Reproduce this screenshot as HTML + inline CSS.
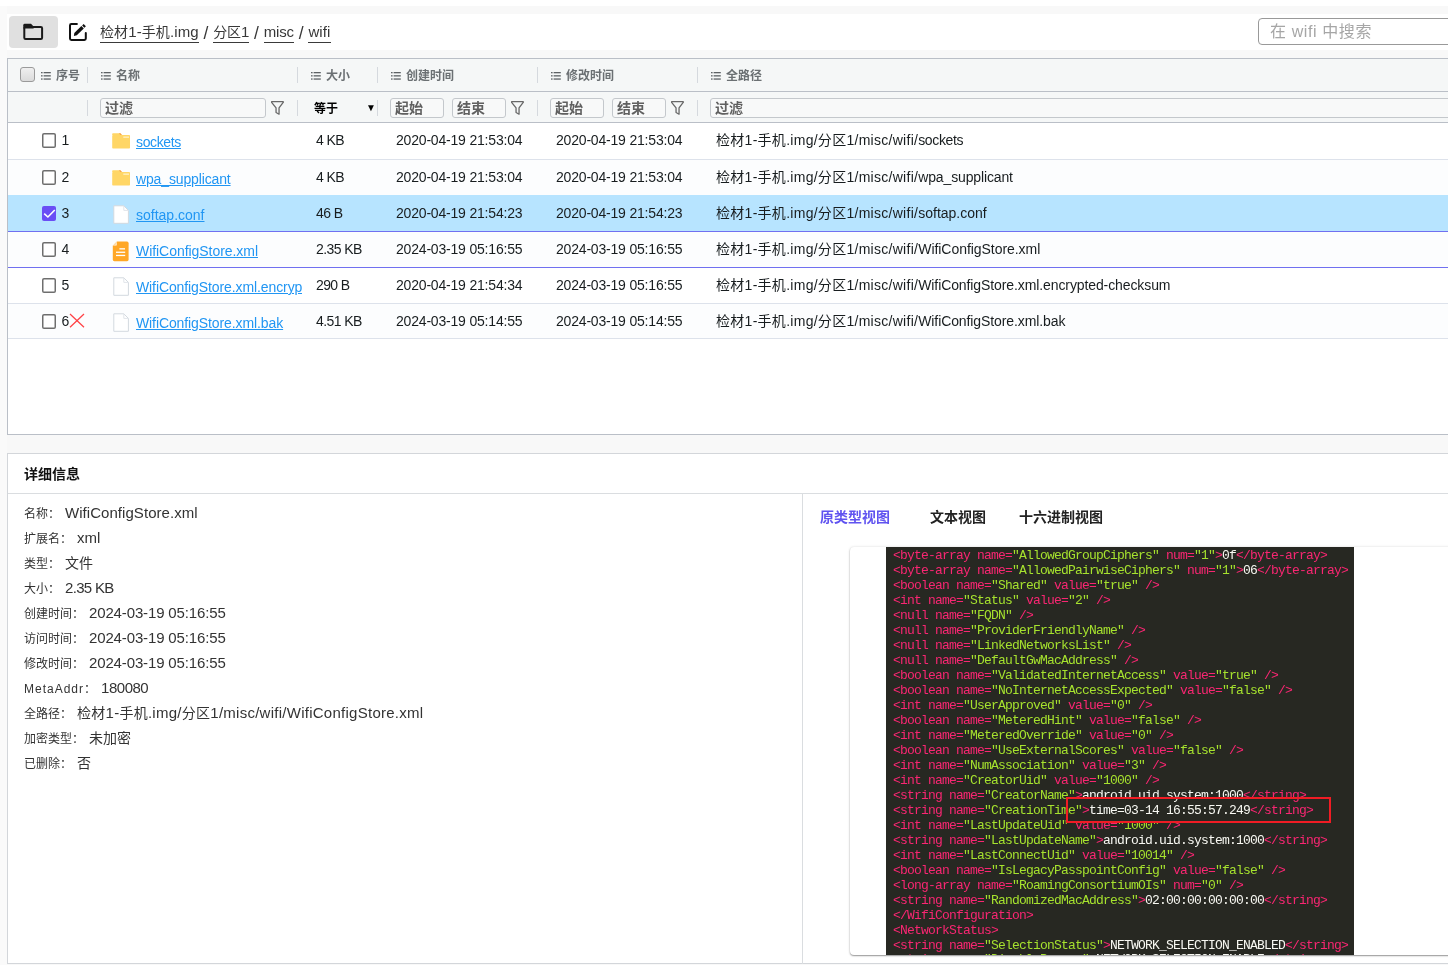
<!DOCTYPE html>
<html lang="zh-CN">
<head>
<meta charset="utf-8">
<title>wifi</title>
<style>
*{box-sizing:border-box;}
html,body{margin:0;padding:0;}
body{width:1448px;height:965px;overflow:hidden;position:relative;background:#f8f8f8;
  font-family:"Liberation Sans","Noto Sans CJK SC",sans-serif;color:#181d1f;font-size:14px;}
.abs{position:absolute;}
svg{display:block;overflow:visible;}
#topwhite{left:0;top:0;width:1448px;height:6px;background:#fff;}
#leftstrip{left:0;top:6px;width:7px;height:959px;background:#fafafa;}
#toolbar{left:7px;top:14px;width:1441px;height:36px;background:#fff;}
#folderbtn{left:9px;top:16px;width:49px;height:32px;background:#e0e0e0;border-radius:4px;}
#crumbs{left:100px;top:21px;height:22px;line-height:22px;font-size:14.5px;color:#333;white-space:nowrap;}
#crumbs span.c{border-bottom:1px solid #333;padding-bottom:1px;}
#search{left:1258px;top:17px;width:200px;height:28px;border:1px solid #999;border-radius:4px;background:#fff;
  font-size:16px;color:#a0a0a0;line-height:26px;padding-left:11px;white-space:nowrap;}
#grid{left:7px;top:58px;width:1450px;height:377px;border:1px solid #babfc7;background:#fff;}
#ghead{left:0;top:0;width:1448px;height:33px;background:#f5f7f7;border-bottom:1px solid #babfc7;}
#gfilter{left:0;top:33px;width:1448px;height:31px;background:#f5f7f7;border-bottom:1px solid #babfc7;}
.hc{position:absolute;top:0;height:32px;line-height:32px;font-size:12px;font-weight:bold;color:#5d6265;white-space:nowrap;}
.sep{position:absolute;width:1px;background:#d5d9de;}
.mi{position:absolute;top:13px;width:10px;height:8px;}
.fu{position:absolute;top:9px;width:14px;height:14px;}
.fin{position:absolute;top:6px;height:20px;border:1px solid #c4c8cc;border-radius:3px;background:#f8f9f9;font-size:14px;line-height:18px;color:#555;padding-left:4px;font-weight:bold;white-space:nowrap;}
.row{position:absolute;left:0;width:1448px;height:36px;border-bottom:1px solid #dde2eb;background:#fff;}
.row.odd{background:#fcfdfe;}
.row.sel{background:#b7e4ff;border-bottom-color:#7070f0;}
.row.foc{border-bottom-color:#7070f0;}
.cell{position:absolute;top:0;height:35px;line-height:34px;font-size:14px;color:#181d1f;white-space:nowrap;}
.cb{position:absolute;left:34px;top:10px;width:15px;height:15px;border:1.5px solid #777;border-radius:3px;background:#fff;}
.cb.on{background:#6a4df5;border-color:#6a4df5;}
.lnk{color:#2196f3;text-decoration:underline;}
.ic{position:absolute;left:104px;}
#detail{left:7px;top:453px;width:1450px;height:511px;border:1px solid #d9d9d9;background:#fff;}
#dtitle{left:16px;top:11px;font-size:14px;font-weight:bold;color:#222;line-height:20px;}
#dline{left:0;top:39px;width:1448px;height:1px;background:#e0e0e0;}
#dvline{left:794px;top:40px;width:1px;height:470px;background:#e0e0e0;}
.kv{position:absolute;left:16px;height:20px;line-height:20px;white-space:nowrap;font-size:15px;color:#333;}
.kv b{font-weight:normal;font-size:12px;color:#333;margin-right:5px;}
.tab{position:absolute;top:54px;font-size:14px;font-weight:bold;color:#222;line-height:20px;white-space:nowrap;}
#card{left:842px;top:93px;width:620px;height:408px;background:#fff;border-radius:4px;box-shadow:0 1px 4px rgba(0,0,0,.25);}
#code{left:878px;top:93px;width:468px;height:408px;background:#272822;overflow:hidden;}
pre{margin:0;position:absolute;font-family:"Liberation Mono","DejaVu Sans Mono",monospace;font-size:11.67px;line-height:15px;color:#f92672;white-space:pre;}
#code pre{left:7px;top:0px;}
pre i{font-style:normal;color:#a6e22e;}
pre u{text-decoration:none;color:#f8f8f2;}
#redbox{left:1058px;top:344px;width:265px;height:26px;border:2px solid #e8262d;background:#272822;overflow:hidden;}
#hcb{left:12px;top:9px;width:15px;height:15px;border:1px solid #9a9a9a;border-radius:3px;background:linear-gradient(#efefef,#dbdbdb);}
#eq{left:306px;top:0;height:31px;line-height:31px;font-size:12px;font-weight:bold;color:#000;}
#tri{left:360px;top:0;height:31px;line-height:31px;font-size:9px;color:#000;}
.tm{letter-spacing:-0.19px;}
.sz{letter-spacing:-0.6px;}
.pf{letter-spacing:0.28px;}
#rbp{left:0;top:0;}
#crumbs .sl{display:inline-block;width:14.55px;text-align:center;}
#root{position:absolute;left:0;top:0;width:1448px;height:965px;will-change:transform;}
.hc{font-weight:700;color:#6b7073;top:1px;}
.fin{font-weight:700;color:#606060;}
.cell{top:-1px;}
.cell.nm{top:1.5px;}
.cb{top:9px;left:33.5px;border-radius:2.5px;}
.cb{top:10px;border-radius:2px;}
.row.sel{box-shadow:0 -1px 0 #b7e4ff;}
.cell{top:0.3px;}
.cell.nm{top:2px;}
.cb{border:1.7px solid #757575;}
.kv em{font-style:normal;font-size:14px;}
.kv s{text-decoration:none;letter-spacing:1px;}
pre{font-size:13px;letter-spacing:-0.801px;}
#code pre{top:1px;}
.tab{top:52.5px;}
#dtitle{top:9.5px;}
#redbox{left:1058px;top:343px;width:265px;height:26px;border:2px solid #f01c24;}
#rbp{left:-175px;top:-11px;}
#search{top:18px;height:27px;line-height:26px;letter-spacing:0.6px;color:#a6a6a6;}
#card{box-shadow:0 1px 1.5px rgba(0,0,0,.38),0 0 3px rgba(0,0,0,.12);height:407.5px;}
#code{height:407.5px;}
#eq{top:1.5px;}
#tri{left:358.1px;top:-0.2px;font-size:10px;}
#crumbs{font-size:15px;}
#crumbs em{font-style:normal;font-size:14px;}
#crumbs span.c{padding-bottom:2px;border-bottom-color:#3a3a3a;}
#crumbs .sl{font-size:17.5px;position:relative;top:1px;}
#crumbs{color:#383838;}
#crumbs{top:20px;}
#crumbs .sl{top:2px;}
#hcb{top:8px;}
.tab.act{color:#6053f0;}
#dtitle{color:#111;}
#detail{border-color:#d3d6da;}
#dline,#dvline{background:#dadde0;}
.cb{border:2px solid #7c7c7c;}
.cb.on{border-color:#6a4df5;}
.cb.on svg{left:-2px !important;top:-2px !important;}
.cb{border:1.6px solid #727272;width:14.6px;height:14.6px;}
.cb.on{border-color:#6a4df5;}
.cb{border:0;box-shadow:inset 0 0 0 1.5px #6e6e6e;}
.cb.on{box-shadow:none;}
.cb.on svg{left:0 !important;top:0 !important;}
pre b.last{font-weight:normal;position:relative;top:-1px;}
</style>
</head>
<body>
<svg width="0" height="0" style="position:absolute">
<symbol id="s-menu" viewBox="0 0 10 8"><g fill="#5d6265"><rect x="0" y="0" width="1.6" height="1.3"/><rect x="2.6" y="0" width="7.2" height="1.3"/><rect x="0" y="3.2" width="1.6" height="1.3"/><rect x="2.6" y="3.2" width="7.2" height="1.3"/><rect x="0" y="6.4" width="1.6" height="1.3"/><rect x="2.6" y="6.4" width="7.2" height="1.3"/></g></symbol>
<symbol id="s-funnel" viewBox="0 0 14 14"><path d="M0.9 0.7 H11.9 Q12.7 0.7 12.2 1.4 L8.05 6.9 V13.2 L5.05 11.5 V6.9 L0.6 1.4 Q0.1 0.7 0.9 0.7 Z" fill="none" stroke="#686868" stroke-width="1.3" stroke-linejoin="round"/></symbol>
<symbol id="s-folder" viewBox="0 0 19 17"><path d="M0.2 1 Q0.2 0.2 1 0.2 H8.4 L9.9 2 H0.2 Z" fill="#ffd666"/><path d="M6.9 0.2 H8.4 L9.9 2 H8.3 Z" fill="#f9a04c"/><rect x="0.2" y="1.9" width="17.8" height="13.7" rx="0.8" fill="#ffd666"/><rect x="11.3" y="3.5" width="5.7" height="1.3" fill="#fff1c6"/></symbol>
<symbol id="s-file" viewBox="0 0 18 20"><path d="M1.8 0.8 H11.8 L16.4 5.4 V18.3 H1.8 Z" fill="#fff" stroke="#d3d9df" stroke-width="1"/><path d="M11.8 0.8 V5.4 H16.4" fill="none" stroke="#e1e5ea" stroke-width="1"/></symbol>
<symbol id="s-xml" viewBox="0 0 18 21"><path d="M5 0.6 H15 Q16.6 0.6 16.6 2.2 V18.6 Q16.6 20.2 15 20.2 H2.4 Q0.8 20.2 0.8 18.6 V4.8 Z" fill="#ffa726"/><path d="M0.8 4.8 L5 0.6 V3.6 Q5 4.8 3.8 4.8 Z" fill="#ffe0b2"/><rect x="7.4" y="7.2" width="5.6" height="1.3" fill="#fff"/><rect x="4" y="10.6" width="9.2" height="1.3" fill="#fff"/><rect x="4" y="13.8" width="9.2" height="1.3" fill="#fff"/></symbol>
</svg>
<div id="root">
<div id="topwhite" class="abs"></div>
<div id="leftstrip" class="abs"></div>
<div id="toolbar" class="abs"></div>
<div id="folderbtn" class="abs"></div>
<svg class="abs" style="left:22px;top:22px" width="24" height="20" viewBox="0 0 24 20">
  <rect x="2.3" y="5" width="17.8" height="12" rx="1.3" fill="none" stroke="#1a1a1a" stroke-width="2"/>
  <path d="M1.3 6.5 V3.2 Q1.3 1.8 2.7 1.8 H9 L11.6 4.4 V6.5 Z" fill="#1a1a1a"/>
</svg>
<svg class="abs" style="left:67px;top:21px" width="22" height="22" viewBox="0 0 22 22">
  <path d="M9.9 3.1 H4.4 Q3 3.1 3 4.5 V17.6 Q3 19 4.4 19 H17.4 Q18.8 19 18.8 17.6 V12.1" fill="none" stroke="#111" stroke-width="2" stroke-linecap="round"/>
  <path d="M6.9 15 L7.3 11.9 L14.4 5.0 L16.8 7.4 L9.8 14.3 Z" fill="#111"/>
  <path d="M15.1 4.4 L16.6 2.9 L18.9 5.3 L17.4 6.8 Z" fill="#111"/>
</svg>
<div id="crumbs" class="abs"><span class="c" style="letter-spacing:0.1px"><em>检材</em>1-<em>手机</em>.img</span><span class="sl">/</span><span class="c" style="letter-spacing:-0.17px"><em>分区</em>1</span><span class="sl">/</span><span class="c" style="letter-spacing:-0.15px">misc</span><span class="sl">/</span><span class="c" style="letter-spacing:0.1px">wifi</span></div>
<div id="search" class="abs">在 wifi 中搜索</div>

<div id="grid" class="abs">
<div id="ghead" class="abs"><div class="abs" id="hcb"></div><svg class="mi" style="left:33px"><use href="#s-menu"/></svg><div class="hc" style="left:48px">序号</div>
<div class="sep" style="left:79px;top:8px;height:16px"></div><svg class="mi" style="left:93px"><use href="#s-menu"/></svg><div class="hc" style="left:108px">名称</div>
<div class="sep" style="left:289px;top:8px;height:16px"></div><svg class="mi" style="left:303px"><use href="#s-menu"/></svg><div class="hc" style="left:318px">大小</div>
<div class="sep" style="left:369px;top:8px;height:16px"></div><svg class="mi" style="left:383px"><use href="#s-menu"/></svg><div class="hc" style="left:398px">创建时间</div>
<div class="sep" style="left:529px;top:8px;height:16px"></div><svg class="mi" style="left:543px"><use href="#s-menu"/></svg><div class="hc" style="left:558px">修改时间</div>
<div class="sep" style="left:689px;top:8px;height:16px"></div><svg class="mi" style="left:703px"><use href="#s-menu"/></svg><div class="hc" style="left:718px">全路径</div></div>
<div id="gfilter" class="abs"><div class="sep" style="left:79px;top:8px;height:16px"></div><div class="sep" style="left:289px;top:8px;height:16px"></div><div class="sep" style="left:369px;top:8px;height:16px"></div><div class="sep" style="left:529px;top:8px;height:16px"></div><div class="sep" style="left:689px;top:8px;height:16px"></div>
<div class="fin" style="left:92px;width:166px">过滤</div><svg class="fu" style="left:262.9px"><use href="#s-funnel"/></svg>
<div class="abs" id="eq">等于</div><div class="abs" id="tri">▼</div>
<div class="fin" style="left:382px;width:54px">起始</div><div class="fin" style="left:444px;width:54px">结束</div><svg class="fu" style="left:502.9px"><use href="#s-funnel"/></svg>
<div class="fin" style="left:542px;width:54px">起始</div><div class="fin" style="left:604px;width:54px">结束</div><svg class="fu" style="left:662.9px"><use href="#s-funnel"/></svg>
<div class="fin" style="left:702px;width:760px">过滤</div></div>
<div class="row " style="top:64px;height:37px"><div class="cb"></div><div class="cell" style="left:53.5px">1</div><svg class="ic" style="top:10px" width="19" height="17"><use href="#s-folder"/></svg><div class="cell nm" style="left:128px;width:165.6px;overflow:hidden"><span class="lnk" style="letter-spacing:-0.36px">sockets</span></div><div class="cell sz" style="left:308px">4 KB</div><div class="cell tm" style="left:388px">2020-04-19 21:53:04</div><div class="cell tm" style="left:548px">2020-04-19 21:53:04</div><div class="cell pt" style="left:708px"><span class="pf">检材1-手机.img/分区1/misc/wifi/</span><span style="letter-spacing:-0.36px">sockets</span></div></div>
<div class="row odd" style="top:101px"><div class="cb"></div><div class="cell" style="left:53.5px">2</div><svg class="ic" style="top:10px" width="19" height="17"><use href="#s-folder"/></svg><div class="cell nm" style="left:128px;width:165.6px;overflow:hidden"><span class="lnk" style="letter-spacing:-0.14px">wpa_supplicant</span></div><div class="cell sz" style="left:308px">4 KB</div><div class="cell tm" style="left:388px">2020-04-19 21:53:04</div><div class="cell tm" style="left:548px">2020-04-19 21:53:04</div><div class="cell pt" style="left:708px"><span class="pf">检材1-手机.img/分区1/misc/wifi/</span><span style="letter-spacing:-0.14px">wpa_supplicant</span></div></div>
<div class="row sel" style="top:137px"><div class="cb on"><svg width="15" height="15" viewBox="0 0 15 15" style="position:absolute;left:-1.5px;top:-1.5px"><path d="M2.2 7.6 L5.9 11 L12.8 4" fill="none" stroke="#fff" stroke-width="1.6"/></svg></div><div class="cell" style="left:53.5px">3</div><svg class="ic" style="top:9px" width="18" height="20"><use href="#s-file"/></svg><div class="cell nm" style="left:128px;width:165.6px;overflow:hidden"><span class="lnk" style="letter-spacing:0px">softap.conf</span></div><div class="cell sz" style="left:308px">46 B</div><div class="cell tm" style="left:388px">2020-04-19 21:54:23</div><div class="cell tm" style="left:548px">2020-04-19 21:54:23</div><div class="cell pt" style="left:708px"><span class="pf">检材1-手机.img/分区1/misc/wifi/</span><span style="letter-spacing:0px">softap.conf</span></div></div>
<div class="row odd foc" style="top:173px"><div class="cb"></div><div class="cell" style="left:53.5px">4</div><svg class="ic" style="top:9px" width="18" height="21"><use href="#s-xml"/></svg><div class="cell nm" style="left:128px;width:165.6px;overflow:hidden"><span class="lnk" style="letter-spacing:-0.05px">WifiConfigStore.xml</span></div><div class="cell sz" style="left:308px">2.35 KB</div><div class="cell tm" style="left:388px">2024-03-19 05:16:55</div><div class="cell tm" style="left:548px">2024-03-19 05:16:55</div><div class="cell pt" style="left:708px"><span class="pf">检材1-手机.img/分区1/misc/wifi/</span><span style="letter-spacing:-0.05px">WifiConfigStore.xml</span></div></div>
<div class="row " style="top:209px"><div class="cb"></div><div class="cell" style="left:53.5px">5</div><svg class="ic" style="top:9px" width="18" height="20"><use href="#s-file"/></svg><div class="cell nm" style="left:128px;width:165.6px;overflow:hidden"><span class="lnk" style="letter-spacing:-0.1px">WifiConfigStore.xml.encrypted-checksum</span></div><div class="cell sz" style="left:308px">290 B</div><div class="cell tm" style="left:388px">2020-04-19 21:54:34</div><div class="cell tm" style="left:548px">2024-03-19 05:16:55</div><div class="cell pt" style="left:708px"><span class="pf">检材1-手机.img/分区1/misc/wifi/</span><span style="letter-spacing:-0.1px">WifiConfigStore.xml.encrypted-checksum</span></div></div>
<div class="row odd" style="top:245px;height:35px"><div class="cb"></div><div class="cell" style="left:53.5px">6</div><svg class="abs" style="left:60.6px;top:9px" width="16" height="15" viewBox="0 0 16 15"><path d="M1 1 L15 14.2 M15 1 L1 14.2" stroke="#ff4246" stroke-width="1.25" fill="none"/></svg><svg class="ic" style="top:9px" width="18" height="20"><use href="#s-file"/></svg><div class="cell nm" style="left:128px;width:165.6px;overflow:hidden"><span class="lnk" style="letter-spacing:-0.1px">WifiConfigStore.xml.bak</span></div><div class="cell sz" style="left:308px">4.51 KB</div><div class="cell tm" style="left:388px">2024-03-19 05:14:55</div><div class="cell tm" style="left:548px">2024-03-19 05:14:55</div><div class="cell pt" style="left:708px"><span class="pf">检材1-手机.img/分区1/misc/wifi/</span><span style="letter-spacing:-0.1px">WifiConfigStore.xml.bak</span></div></div>
</div>

<div id="detail" class="abs">
<div id="dtitle" class="abs">详细信息</div>
<div id="dline" class="abs"></div>
<div id="dvline" class="abs"></div>
<div class="kv" style="top:49px"><b>名称：</b><span style="letter-spacing:0.05px">WifiConfigStore.xml</span></div>
<div class="kv" style="top:74px"><b>扩展名：</b><span style="letter-spacing:0px">xml</span></div>
<div class="kv" style="top:99px"><b>类型：</b><span style="letter-spacing:0px"><em>文件</em></span></div>
<div class="kv" style="top:124px"><b>大小：</b><span style="letter-spacing:-0.7px">2.35 KB</span></div>
<div class="kv" style="top:149px"><b>创建时间：</b><span style="letter-spacing:-0.14px">2024-03-19 05:16:55</span></div>
<div class="kv" style="top:174px"><b>访问时间：</b><span style="letter-spacing:-0.14px">2024-03-19 05:16:55</span></div>
<div class="kv" style="top:199px"><b>修改时间：</b><span style="letter-spacing:-0.14px">2024-03-19 05:16:55</span></div>
<div class="kv" style="top:224px"><b><s>MetaAddr</s>：</b><span style="letter-spacing:-0.48px">180080</span></div>
<div class="kv" style="top:249px"><b>全路径：</b><span style="letter-spacing:0.26px"><em>检材</em>1-<em>手机</em>.img/<em>分区</em>1/misc/wifi/WifiConfigStore.xml</span></div>
<div class="kv" style="top:274px"><b>加密类型：</b><span style="letter-spacing:0px"><em>未加密</em></span></div>
<div class="kv" style="top:299px"><b>已删除：</b><span style="letter-spacing:0px"><em>否</em></span></div>
<div class="tab act" style="left:812px">原类型视图</div><div class="tab" style="left:922px">文本视图</div><div class="tab" style="left:1011px">十六进制视图</div>
<div id="card" class="abs"></div>
<div id="code" class="abs"><pre>&lt;byte-array name=<i>"AllowedGroupCiphers"</i> num=<i>"1"</i>&gt;<u>0f</u>&lt;/byte-array&gt;
&lt;byte-array name=<i>"AllowedPairwiseCiphers"</i> num=<i>"1"</i>&gt;<u>06</u>&lt;/byte-array&gt;
&lt;boolean name=<i>"Shared"</i> value=<i>"true"</i> /&gt;
&lt;int name=<i>"Status"</i> value=<i>"2"</i> /&gt;
&lt;null name=<i>"FQDN"</i> /&gt;
&lt;null name=<i>"ProviderFriendlyName"</i> /&gt;
&lt;null name=<i>"LinkedNetworksList"</i> /&gt;
&lt;null name=<i>"DefaultGwMacAddress"</i> /&gt;
&lt;boolean name=<i>"ValidatedInternetAccess"</i> value=<i>"true"</i> /&gt;
&lt;boolean name=<i>"NoInternetAccessExpected"</i> value=<i>"false"</i> /&gt;
&lt;int name=<i>"UserApproved"</i> value=<i>"0"</i> /&gt;
&lt;boolean name=<i>"MeteredHint"</i> value=<i>"false"</i> /&gt;
&lt;int name=<i>"MeteredOverride"</i> value=<i>"0"</i> /&gt;
&lt;boolean name=<i>"UseExternalScores"</i> value=<i>"false"</i> /&gt;
&lt;int name=<i>"NumAssociation"</i> value=<i>"3"</i> /&gt;
&lt;int name=<i>"CreatorUid"</i> value=<i>"1000"</i> /&gt;
&lt;string name=<i>"CreatorName"</i>&gt;<u>android.uid.system:1000</u>&lt;/string&gt;
&lt;string name=<i>"CreationTime"</i>&gt;<u>time=03-14 16:55:57.249</u>&lt;/string&gt;
&lt;int name=<i>"LastUpdateUid"</i> value=<i>"1000"</i> /&gt;
&lt;string name=<i>"LastUpdateName"</i>&gt;<u>android.uid.system:1000</u>&lt;/string&gt;
&lt;int name=<i>"LastConnectUid"</i> value=<i>"10014"</i> /&gt;
&lt;boolean name=<i>"IsLegacyPasspointConfig"</i> value=<i>"false"</i> /&gt;
&lt;long-array name=<i>"RoamingConsortiumOIs"</i> num=<i>"0"</i> /&gt;
&lt;string name=<i>"RandomizedMacAddress"</i>&gt;<u>02:00:00:00:00:00</u>&lt;/string&gt;
&lt;/WifiConfiguration&gt;
&lt;NetworkStatus&gt;
&lt;string name=<i>"SelectionStatus"</i>&gt;<u>NETWORK_SELECTION_ENABLED</u>&lt;/string&gt;
<b class="last">&lt;string name=<i>"DisableReason"</i>&gt;<u>NETWORK_SELECTION_ENABLE</u>&lt;/string&gt;</b></pre></div>
<div id="redbox" class="abs"><pre id="rbp">&lt;string name=<i>"CreatorName"</i>&gt;<u>android.uid.system:1000</u>&lt;/string&gt;
&lt;string name=<i>"CreationTime"</i>&gt;<u>time=03-14 16:55:57.249</u>&lt;/string&gt;</pre></div>
</div>

</div>
</body>
</html>
